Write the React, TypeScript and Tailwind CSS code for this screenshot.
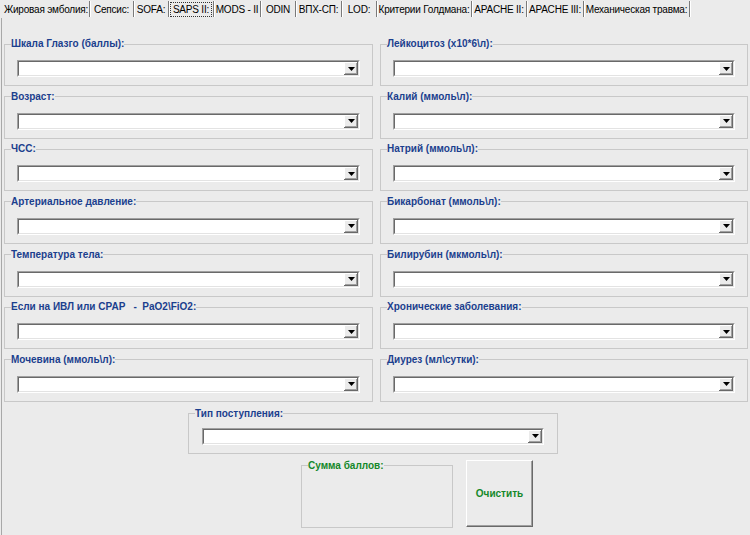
import React from 'react';

const tabs = [
    { label: "Жировая эмболия:", w: 87 },
    { label: "Сепсис:", w: 44 },
    { label: "SOFA:", w: 35 },
    { label: "SAPS II:", w: 45, active: true },
    { label: "MODS - II", w: 47 },
    { label: "ODIN", w: 35 },
    { label: "ВПХ-СП:", w: 46 },
    { label: "LOD:", w: 35 },
    { label: "Критерии Голдмана:", w: 95 },
    { label: "APACHE II:", w: 55 },
    { label: "APACHE III:", w: 57 },
    { label: "Механическая травма:", w: 106 },
];

const leftFields = [
    "Шкала Глазго (баллы):",
    "Возраст:",
    "ЧСС:",
    "Артериальное давление:",
    "Температура тела:",
    "Если на ИВЛ или CPAP   -  PaO2\\FiO2:",
    "Мочевина (ммоль\\л):",
];

const rightFields = [
    "Лейкоцитоз (x10*6\\л):",
    "Калий (ммоль\\л):",
    "Натрий (ммоль\\л):",
    "Бикарбонат (ммоль\\л):",
    "Билирубин (мкмоль\\л):",
    "Хронические заболевания:",
    "Диурез (мл\\сутки):",
];

// выпадающий список в стиле Windows
const Combo = () => (
    <div className="h-[17px] border border-t-[#a0a0a0] border-l-[#a0a0a0] border-r-white border-b-white">
        <div className="h-full flex justify-end bg-white border border-t-[#696969] border-l-[#696969] border-r-[#e3e3e3] border-b-[#e3e3e3]">
            <div className="w-[14px] h-[13px] bg-[#ebebeb] flex items-center justify-center shadow-[inset_-1px_-1px_0_#696969,inset_1px_1px_0_#ffffff,inset_-2px_-2px_0_#a0a0a0]">
                <svg width="7" height="4" viewBox="0 0 7 4">
                    <polygon points="0,0 7,0 3.5,4" fill="#000" />
                </svg>
            </div>
        </div>
    </div>
);

const Field = ({ label }: { label: string }) => (
    <fieldset className="border border-[#c8c8c8] px-[6px] pb-[8px]">
        <legend className="text-[10px] leading-[12px] font-bold text-[#1b3f8e] whitespace-pre px-0">{label}</legend>
        <div className="mt-[10px] mx-[6px]">
            <Combo />
        </div>
    </fieldset>
);

const App = () => {
    return (
        <div className="w-[750px] h-[535px] bg-[#ebebeb] overflow-hidden font-['Liberation_Sans',Arial,sans-serif] text-black">
            {/* Вкладки */}
            <div className="flex h-[18px] pt-[1px] pl-[3px]">
                {tabs.map((t) => (
                    <div
                        key={t.label}
                        style={{ width: t.w }}
                        className="h-[16px] flex items-center justify-center border-r border-[#7a7a7a] shadow-[1px_0_0_#ffffff] text-[10px] tracking-[-0.2px] whitespace-nowrap"
                    >
                        {t.active ? (
                            <span className="h-[15px] w-[42px] flex items-center justify-center border border-dotted border-[#333]">{t.label}</span>
                        ) : (
                            t.label
                        )}
                    </div>
                ))}
            </div>

            {/* Содержимое вкладки */}
            <div className="ml-[1px] h-[517px] border-l border-[#a8a8a8] pl-[2px] pt-[20px]">
                <div className="flex gap-[7px]">
                    <div className="w-[369px] flex flex-col gap-[4.67px]">
                        {leftFields.map((f) => (
                            <Field key={f} label={f} />
                        ))}
                    </div>
                    <div className="w-[368px] flex flex-col gap-[4.67px]">
                        {rightFields.map((f) => (
                            <Field key={f} label={f} />
                        ))}
                    </div>
                </div>

                {/* Тип поступления */}
                <fieldset className="mt-[6px] ml-[184px] w-[370px] border border-[#c8c8c8] px-[6px] pb-[8px]">
                    <legend className="text-[10px] leading-[12px] font-bold text-[#1b3f8e] px-0">Тип поступления:</legend>
                    <div className="mt-[8px] mx-[7px]">
                        <Combo />
                    </div>
                </fieldset>

                <div className="flex items-start mt-[6px]">
                    <fieldset className="ml-[297px] w-[152px] h-[68px] border border-[#c8c8c8] px-[6px]">
                        <legend className="text-[10px] leading-[12px] font-bold text-[#14882a] px-0">Сумма баллов:</legend>
                    </fieldset>
                    <button className="ml-[13px] w-[67px] h-[67px] bg-[#ebebeb] border border-t-white border-l-white border-r-[#696969] border-b-[#696969] shadow-[inset_-1px_-1px_0_#a0a0a0] text-[10px] font-bold text-[#14882a] flex items-center justify-center">
                        Очистить
                    </button>
                </div>
            </div>
        </div>
    );
};

export default App;
